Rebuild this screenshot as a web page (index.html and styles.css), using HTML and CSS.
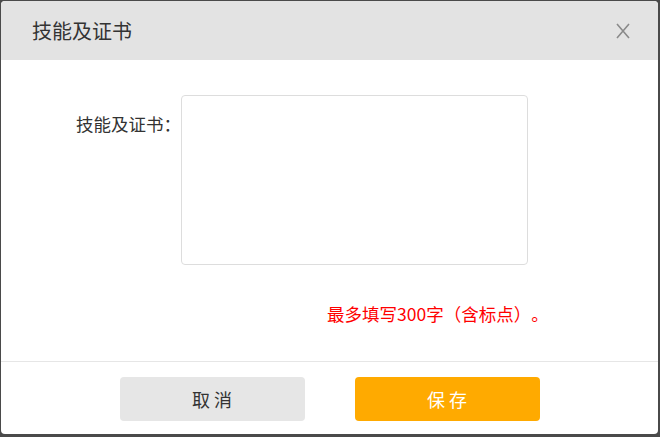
FILE: index.html
```html
<!DOCTYPE html>
<html lang="zh-CN">

<head>
  <meta charset="UTF-8">
  <meta name="viewport" content="width=device-width, initial-scale=1.0">
  <title>技能及证书</title>
  <link rel="stylesheet" href="styles.css">
</head>

<body>
  <div class="dialog">
    <header class="dialog-head">
      <h3>技能及证书</h3>
      <button class="close" type="button" aria-label="关闭">
        <svg width="14" height="16" viewBox="0 0 14 16">
          <path d="M1 1 L13 15 M13 1 L1 15" stroke="#8a8a8a" stroke-width="1.6" fill="none" />
        </svg>
      </button>
    </header>
    <section class="dialog-body">
      <div class="field">
        <label for="skills">技能及证书：</label>
        <textarea id="skills"></textarea>
      </div>
      <p class="tip">最多填写300字（含标点）。</p>
    </section>
    <footer class="dialog-foot">
      <button class="btn btn-cancel" type="button">取消</button>
      <button class="btn btn-save" type="button">保存</button>
    </footer>
  </div>
</body>

</html>
```

FILE: styles.css
```css
* {
  box-sizing: border-box;
}

body {
  margin: 0;
  height: 437px;
  overflow: hidden;
  background: #4a4a4a;
  font-family: "Noto Sans CJK SC", "Noto Sans", sans-serif;
  text-spacing-trim: space-all;
}

.dialog {
  width: 657px;
  height: 433px;
  margin: 1px 2px 0 1px;
  background: #fff;
  border-radius: 4px;
  overflow: hidden;
}

.dialog-head {
  height: 59px;
  display: flex;
  align-items: center;
  justify-content: space-between;
  padding: 0 28px 0 31px;
  background: #e3e3e3;
}

.dialog-head h3 {
  margin: 0;
  font-size: 20px;
  font-weight: normal;
  color: #333;
}

.close {
  padding: 0;
  border: 0;
  background: none;
  display: flex;
}

.dialog-body {
  height: 301px;
  padding-top: 35px;
}

.field {
  display: flex;
  align-items: flex-start;
}

.field label {
  width: 180px;
  padding-top: 16px;
  text-align: right;
  font-size: 17.5px;
  color: #333;
}

textarea {
  width: 347px;
  height: 170px;
  border: 1px solid #ddd;
  border-radius: 4px;
  resize: none;
}

.tip {
  margin: 36px 0 0 326px;
  font-size: 17.5px;
  color: #f00;
}

.dialog-foot {
  height: 73px;
  border-top: 1px solid #e6e6e6;
  display: flex;
  justify-content: center;
  gap: 50px;
  padding-top: 15px;
}

.btn {
  width: 185px;
  height: 44px;
  border: 0;
  border-radius: 4px;
  font-family: inherit;
  font-size: 18px;
  letter-spacing: 4px;
  text-indent: 4px;
}

.btn-cancel {
  background: #e6e6e6;
  color: #333;
}

.btn-save {
  background: #ffaa00;
  color: #fff;
}
```
